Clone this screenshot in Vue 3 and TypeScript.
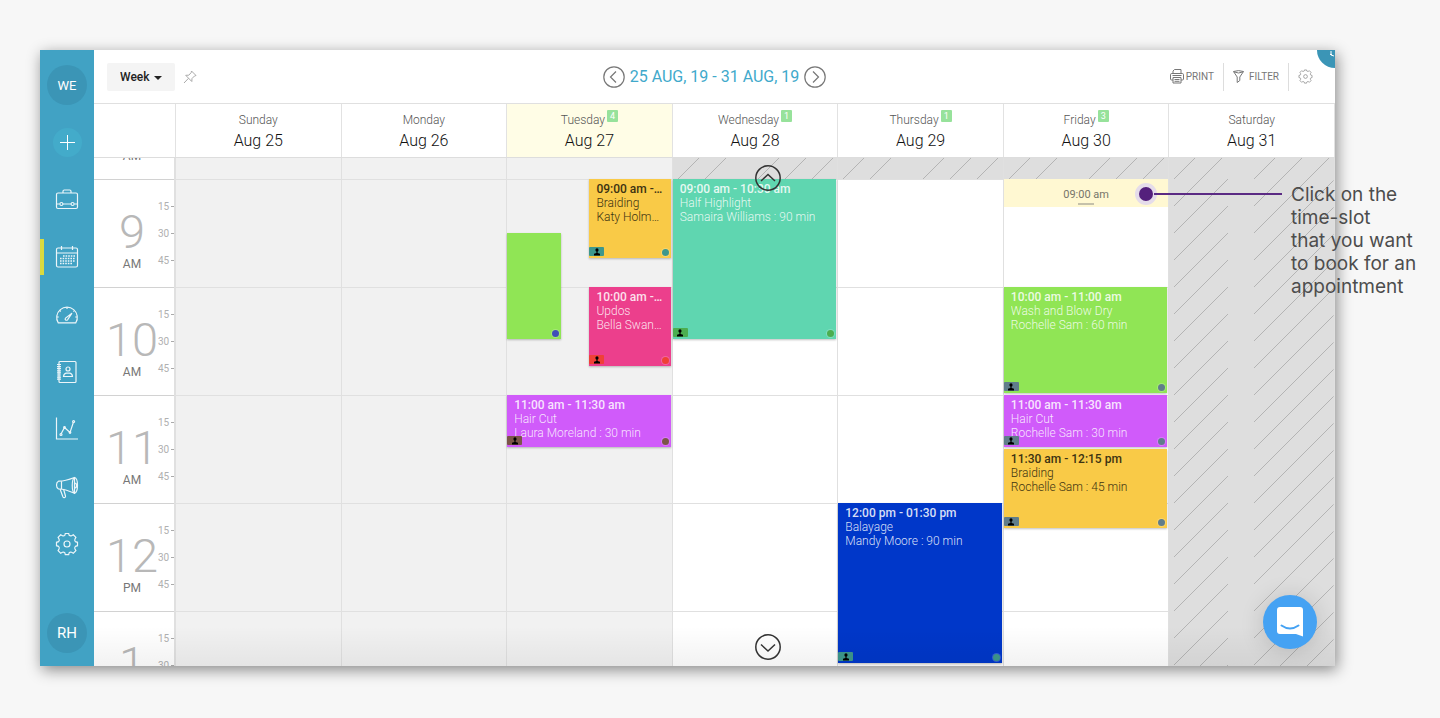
<script setup lang="ts">
interface Appointment {
  start: number
  end: number
  lane?: 'half' | 'third'
  color: string
  ink: string
  mark: string
  time?: string
  service?: string
  client?: string
}

interface Day {
  name: string
  date: string
  count?: number
  today?: boolean
  past?: boolean
  closedUntil?: number
  freeSlot?: boolean
  items: Appointment[]
}

const FIRST_HOUR = 8
const HOUR_HEIGHT = 108
const GAP = 2

const at = (hour: number, minute = 0): number => hour * 60 + minute
const toPixels = (minutes: number): number => Math.round((minutes * HOUR_HEIGHT) / 60)
const offset = (minutes: number): string => `${toPixels(minutes - at(FIRST_HOUR))}px`

const place = (item: Appointment) => ({
  top: offset(item.start),
  height: `${toPixels(item.end - item.start) - GAP}px`,
  background: item.color,
  color: item.ink,
})

const amber = '#f9ca47'
const pink = '#ec3f8c'
const violet = '#d05bfa'
const lime = '#90e555'
const dark = '#3d3312'
const light = 'rgba(255, 255, 255, 0.85)'

const hours = [
  { label: '8', half: 'AM' },
  { label: '9', half: 'AM' },
  { label: '10', half: 'AM' },
  { label: '11', half: 'AM' },
  { label: '12', half: 'PM' },
  { label: '1', half: 'PM' },
]

const days: Day[] = [
  { name: 'Sunday', date: 'Aug 25', past: true, items: [] },
  { name: 'Monday', date: 'Aug 26', past: true, items: [] },
  {
    name: 'Tuesday',
    date: 'Aug 27',
    count: 4,
    today: true,
    past: true,
    items: [
      { start: at(9), end: at(9, 45), lane: 'half', color: amber, ink: dark, mark: '#3d978c', time: '09:00 am - 09:45 am', service: 'Braiding', client: 'Katy Holmes : 45 min' },
      { start: at(9, 30), end: at(10, 30), lane: 'third', color: lime, ink: light, mark: '#4050b8' },
      { start: at(10), end: at(10, 45), lane: 'half', color: pink, ink: light, mark: '#ef4136', time: '10:00 am - 10:45 am', service: 'Updos', client: 'Bella Swanson : 45 min' },
      { start: at(11), end: at(11, 30), color: violet, ink: light, mark: '#7b5548', time: '11:00 am - 11:30 am', service: 'Hair Cut', client: 'Laura Moreland : 30 min' },
    ],
  },
  {
    name: 'Wednesday',
    date: 'Aug 28',
    count: 1,
    closedUntil: at(9),
    items: [
      { start: at(9), end: at(10, 30), color: '#5fd6b0', ink: light, mark: '#4cae50', time: '09:00 am - 10:30 am', service: 'Half Highlight', client: 'Samaira Williams : 90 min' },
    ],
  },
  {
    name: 'Thursday',
    date: 'Aug 29',
    count: 1,
    closedUntil: at(9),
    items: [
      { start: at(12), end: at(13, 30), color: '#0037c9', ink: light, mark: '#3d978c', time: '12:00 pm - 01:30 pm', service: 'Balayage', client: 'Mandy Moore : 90 min' },
    ],
  },
  {
    name: 'Friday',
    date: 'Aug 30',
    count: 3,
    closedUntil: at(9),
    freeSlot: true,
    items: [
      { start: at(10), end: at(11), color: lime, ink: light, mark: '#607d8b', time: '10:00 am - 11:00 am', service: 'Wash and Blow Dry', client: 'Rochelle Sam : 60 min' },
      { start: at(11), end: at(11, 30), color: violet, ink: light, mark: '#607d8b', time: '11:00 am - 11:30 am', service: 'Hair Cut', client: 'Rochelle Sam : 30 min' },
      { start: at(11, 30), end: at(12, 15), color: amber, ink: dark, mark: '#607d8b', time: '11:30 am - 12:15 pm', service: 'Braiding', client: 'Rochelle Sam : 45 min' },
    ],
  },
  { name: 'Saturday', date: 'Aug 31', closedUntil: at(14), items: [] },
]

const hatchStarts = [5, 32, 85, 112, 139]
</script>

<template>
  <div class="page">
    <div class="window">
      <nav class="sidebar" aria-label="Main">
        <button class="avatar" type="button">WE</button>
        <button class="add" type="button" aria-label="Add">
          <svg width="15" height="15" viewBox="0 0 15 15"><path d="M7.500 0v15M0 7.500h15" /></svg>
        </button>
        <div class="menu">
          <button type="button" aria-label="Sales">
            <svg viewBox="0 0 24 24"><rect x="1.500" y="5" width="21" height="15.500" rx="1.500" /><path d="M8 5V3.300Q8 2 9.300 2h5.400Q16 2 16 3.300V5M1.500 16h3.300M8 16h8M19.200 16h3.300" /><circle cx="6.400" cy="16" r="1.500" /><circle cx="17.600" cy="16" r="1.500" /></svg>
          </button>
          <button type="button" class="active" aria-label="Calendar">
            <svg viewBox="0 0 24 24"><rect x="1.500" y="3" width="21" height="19" rx="1.500" /><path d="M1.500 8h21M6.500 1v4M17.500 1v4" /><path class="dots" d="M8 11h12M5 13.500h15M5 16h15M5 18.500h12" /></svg>
          </button>
          <button type="button" aria-label="Dashboard">
            <svg viewBox="0 0 24 24"><path d="M3.200 19.800A10.300 10.300 0 1 1 20.800 19.800Z" /><path d="M12 4v2M4.800 7.500l1 1M1.800 14h2M22.200 14h-2M18.800 8l-.5.5" /><path d="M17 10.200l-4.500 6.600a1.300 1.300 0 0 1-2-1.700Z" /></svg>
          </button>
          <button type="button" aria-label="Clients">
            <svg viewBox="0 0 24 24"><rect x="4" y="1.500" width="17" height="21" rx="1" /><path d="M2 4.500h4M2 6.600h4M2 8.700h4M2 10.800h4M2 12.900h4M2 15h4M2 17.100h4M2 19.200h4" /><circle cx="13" cy="9" r="2" /><path d="M8.500 16.500q.3-3 3-3.300h3q2.700.3 3 3.300Z" /></svg>
          </button>
          <button type="button" aria-label="Reports">
            <svg viewBox="0 0 24 24"><path d="M1.500 0.500v21.500h21.500M6 17l3.500-6.500 5.500 5 3.500-10.500" /><circle cx="6" cy="17.500" r="1" /><circle cx="9.500" cy="10.500" r=".8" /><circle cx="15" cy="15.500" r=".8" /><circle cx="18.600" cy="4.500" r="1" /></svg>
          </button>
          <button type="button" aria-label="Marketing">
            <svg viewBox="0 0 24 24"><path d="M19.500 2.500Q9 6.500 3.500 6.200 1.500 7 1.500 10t2 4q6-.2 16 4.300Z" /><path d="M19.500 2.500c4 1 4 14.500 0 15.800-3-2-3-13.800 0-15.800M6.500 6.200v7.700M5 14l3 8q.6 1 1.800.5 1-.5.700-1.500L8.500 14M19.500 8q2 0 2 2.500t-2 2.500" /></svg>
          </button>
          <button type="button" aria-label="Settings">
            <svg viewBox="0 0 24 24"><circle cx="12" cy="12" r="3" /><path d="M9.800 3.300 10.300 1.500h3.400l.5 1.800q1 .9 2.400.4L18.300 2.800l2.600 2.600-1 1.800q-.5 1.400.5 2.500l2.100.6v3.400l-2.100.6q-1 1-.5 2.500l1 1.800-2.600 2.600-1.700-1q-1.500-.5-2.400.5l-.5 1.900h-3.400l-.5-1.900q-1-1-2.400-.5l-1.700 1-2.600-2.600 1-1.800q.5-1.500-.5-2.500l-2.100-.6v-3.400l2.100-.6q1-1 .5-2.500l-1-1.800 2.600-2.600 1.700.9q1.500.5 2.400-.4Z" /></svg>
          </button>
        </div>
        <button class="avatar user" type="button">RH</button>
      </nav>

      <main class="main">
        <header class="toolbar">
          <div class="tools">
            <div class="picker">
              <select aria-label="View"><option>Week</option></select>
              <svg width="8" height="4" viewBox="0 0 8 4"><path d="M0 0h8L4 4Z" /></svg>
            </div>
            <button type="button" class="pin" aria-label="Pin">
              <svg width="14" height="14" viewBox="0 0 14 14"><path d="M8.500 1 13 5.500 11.500 6 9 8.500 8.800 11.500 2.700 5.300 5.800 5.200 8.200 2.600ZM5.500 8.300 1 13" /></svg>
            </button>
          </div>
          <div class="range">
            <button type="button" aria-label="Previous week">
              <svg width="22" height="22" viewBox="0 0 22 22"><circle cx="11" cy="11" r="10.200" /><path d="M13 5.500 7.500 11l5.500 5.500" /></svg>
            </button>
            <span>25 AUG, 19 - 31 AUG, 19</span>
            <button type="button" aria-label="Next week">
              <svg width="22" height="22" viewBox="0 0 22 22"><circle cx="11" cy="11" r="10.200" /><path d="M9 5.500 14.500 11 9 16.500" /></svg>
            </button>
          </div>
          <div class="actions">
            <button type="button">
              <svg width="14" height="15" viewBox="0 0 14 15"><path d="M3 4.500V2l1.500-1.500H11v4M3 11H1.700Q.5 11 .5 10V5.700Q.5 4.500 1.700 4.500h10.600q1.200 0 1.200 1.200V10q0 1-1.200 1H11M3 8.500h8v5.500H3ZM4.500 10.500h5M4.500 12.300h5M2.500 6.500h9" /></svg>
              PRINT
            </button>
            <button type="button" class="filter">
              <svg width="11" height="13" viewBox="0 0 11 13"><path d="M.5 1.500Q5.500-.3 10.500 1.500L6.800 7v3.500L4.200 12.500V7ZM.7 1.800q4.800 2.400 9.600 0" /></svg>
              FILTER
            </button>
            <button type="button" class="gear" aria-label="Calendar settings">
              <svg width="15" height="15" viewBox="0 0 24 24"><circle cx="12" cy="12" r="3" /><path d="M9.800 3.300 10.300 1.500h3.400l.5 1.800q1 .9 2.400.4L18.300 2.800l2.600 2.600-1 1.800q-.5 1.400.5 2.500l2.100.6v3.400l-2.100.6q-1 1-.5 2.500l1 1.800-2.600 2.600-1.700-1q-1.500-.5-2.400.5l-.5 1.900h-3.400l-.5-1.900q-1-1-2.400-.5l-1.700 1-2.600-2.600 1-1.800q.5-1.500-.5-2.500l-2.100-.6v-3.400l2.100-.6q1-1 .5-2.500l-1-1.800 2.600-2.600 1.700.9q1.500.5 2.400-.4Z" /></svg>
            </button>
          </div>
        </header>

        <div class="days">
          <div class="corner"></div>
          <div v-for="day in days" :key="day.name" class="day" :class="{ today: day.today }">
            <div class="day-name">{{ day.name }}<span v-if="day.count" class="count">{{ day.count }}</span></div>
            <div class="day-date">{{ day.date }}</div>
          </div>
        </div>

        <div class="board">
          <div class="schedule">
            <div class="times">
              <div v-for="hour in hours" :key="hour.label" class="hour">
                <div class="hour-label">
                  <span class="number">{{ hour.label }}</span>
                  <span class="meridiem">{{ hour.half }}</span>
                </div>
                <div class="ticks"><span>15</span><span>30</span><span>45</span></div>
              </div>
            </div>
            <div v-for="(day, index) in days" :key="day.name" class="column" :class="{ past: day.past }">
              <div v-for="hour in hours" :key="hour.label" class="cell"></div>
              <svg v-if="day.closedUntil" class="closed" :style="{ height: offset(day.closedUntil) }">
                <defs>
                  <pattern :id="`hatch-${index}`" width="166" height="27" patternUnits="userSpaceOnUse">
                    <path v-for="x in hatchStarts" :key="x" :d="`M${x} 27l27-27`" />
                  </pattern>
                </defs>
                <rect width="100%" height="100%" :fill="`url(#hatch-${index})`" />
              </svg>
              <button v-if="day.freeSlot" type="button" class="slot" :style="{ top: offset(at(9)) }">09:00 am</button>
              <article v-for="item in day.items" :key="item.start" class="event" :class="item.lane" :style="place(item)">
                <template v-if="item.time">
                  <strong>{{ item.time }}</strong>
                  <p>{{ item.service }}</p>
                  <p>{{ item.client }}</p>
                  <span class="person" :style="{ background: item.mark }">
                    <svg width="8" height="8" viewBox="0 0 8 8"><circle cx="4" cy="1.900" r="1.600" /><path d="M3.400 3h1.200v2L7 5.700V7.500H1V5.700L3.400 5Z" /></svg>
                  </span>
                </template>
                <span class="dot" :style="{ background: item.mark }"></span>
              </article>
            </div>
          </div>
          <div class="fade"></div>
          <button type="button" class="scroll up" aria-label="Earlier">
            <svg width="26" height="26" viewBox="0 0 26 26"><circle cx="13" cy="13" r="12.200" /><path d="M6 16l7-6.500L20 16" /></svg>
          </button>
          <button type="button" class="scroll down" aria-label="Later">
            <svg width="26" height="26" viewBox="0 0 26 26"><circle cx="13" cy="13" r="12.200" /><path d="M6 10.500l7 6.500 7-6.500" /></svg>
          </button>
        </div>
      </main>

      <button type="button" class="help" aria-label="Help">
        <svg width="36" height="36" viewBox="0 0 36 36"><path d="M14 19v4l3 1M13 22.500h2" /></svg>
      </button>
      <button type="button" class="chat" aria-label="Open chat">
        <svg width="26" height="30" viewBox="0 0 26 30"><path class="bubble" d="M3 0h20q3 0 3 3v26.500L19 27H3q-3 0-3-3V3Q0 0 3 0Z" /><path class="smile" d="M4.500 18.500q8.500 6 17 0" /></svg>
      </button>
    </div>

    <aside class="callout">
      <span class="callout-dot"></span>
      <span class="callout-line"></span>
      <p>Click on the<br />time-slot<br />that you want<br />to book for an<br />appointment</p>
    </aside>
  </div>
</template>

<style>
body {
  background: #f7f7f7;
}
</style>

<style scoped>
.page {
  position: relative;
  box-sizing: border-box;
  padding: 50px 105px 52px 40px;
  font-family: Roboto, "Liberation Sans", sans-serif;
  color: #333;
}

button {
  font: inherit;
  color: inherit;
  border: 0;
  padding: 0;
  background: none;
  display: flex;
  align-items: center;
  justify-content: center;
}

svg {
  display: block;
  fill: none;
  stroke: currentColor;
}

p {
  margin: 0;
}

.window {
  position: relative;
  display: flex;
  height: calc(100vh - 102px);
  min-height: 560px;
  background: #fff;
  box-shadow: 2px 4px 14px rgba(0, 0, 0, 0.45);
  overflow: hidden;
}

.sidebar {
  flex: none;
  box-sizing: border-box;
  width: 54px;
  padding: 15px 0 13px;
  background: #41a2c4;
  color: #fff;
  display: flex;
  flex-direction: column;
  align-items: center;
}

.avatar {
  width: 40px;
  height: 40px;
  border-radius: 50%;
  background: #3b95b6;
  font-size: 13px;
}

.user {
  margin-top: auto;
  font-size: 15px;
}

.add {
  width: 29px;
  height: 29px;
  margin: 23px 0 14px;
  border-radius: 50%;
  background: #43abca;
}

.menu {
  width: 100%;
  height: 402px;
  display: grid;
  grid-auto-rows: 1fr;
}

.menu button {
  position: relative;
  width: 100%;
}

.menu svg {
  width: 24px;
  height: 24px;
  opacity: 0.9;
  stroke-width: 1.2;
}

.menu .dots {
  stroke-width: 1.6;
  stroke-dasharray: 1.6 1;
}

.menu .active::before {
  content: "";
  position: absolute;
  left: 0;
  top: 11px;
  width: 4px;
  height: 36px;
  background: #dada3f;
}

.main {
  flex: 1;
  min-width: 0;
  display: flex;
  flex-direction: column;
}

.toolbar {
  flex: none;
  height: 53px;
  display: grid;
  grid-template-columns: 1fr auto 1fr;
  align-items: center;
  border-bottom: 1px solid #e0e0e0;
}

.tools {
  display: flex;
  align-items: center;
  gap: 8px;
  padding-left: 13px;
}

.picker {
  position: relative;
}

.picker select {
  appearance: none;
  height: 28px;
  width: 68px;
  padding: 0 13px;
  border: 0;
  border-radius: 2px;
  background: #f4f4f4;
  color: #222;
  font: 500 12px Roboto, sans-serif;
}

.picker svg {
  position: absolute;
  right: 13px;
  top: 13px;
  fill: #222;
  stroke: none;
}

.pin {
  color: #aaa;
}

.range {
  display: flex;
  align-items: center;
  gap: 5px;
  color: #41a9cb;
  font-size: 16px;
}

.range button {
  color: #777;
}

.range svg {
  stroke-width: 1.2;
}

.actions {
  display: flex;
  align-items: center;
  justify-content: flex-end;
  padding-right: 13px;
  font-size: 10px;
  color: #777;
}

.actions button {
  height: 28px;
  gap: 2px;
  padding: 0 9px;
}

.actions .filter {
  gap: 5px;
  border: solid #ddd;
  border-width: 0 1px;
}

.days,
.schedule {
  display: grid;
  grid-template-columns: 82px repeat(7, minmax(0, 1fr));
}

.days {
  flex: none;
  height: 53px;
  border-bottom: 1px solid #ddd;
}

.corner,
.day {
  border-right: 1px solid #e2e2e2;
}

.day {
  display: flex;
  flex-direction: column;
  align-items: center;
  padding-top: 6px;
}

.today {
  background: #fffde6;
}

.day-name {
  display: flex;
  gap: 2px;
  font-size: 12px;
  line-height: 20px;
  font-weight: 300;
  color: #555;
}

.count {
  width: 11px;
  height: 12px;
  border-radius: 1px;
  background: #97e29b;
  color: #fff;
  font-size: 9px;
  font-weight: 400;
  line-height: 12px;
  text-align: center;
}

.day-date {
  font-size: 16px;
  line-height: 21px;
  font-weight: 300;
  color: #111;
}

.board {
  position: relative;
  flex: 1;
  min-height: 0;
  overflow: hidden;
}

.schedule {
  margin-top: -87px;
}

.times {
  border-right: 2px solid #e0e0e0;
}

.hour {
  box-sizing: border-box;
  height: 108px;
  display: flex;
  justify-content: space-between;
  border-top: 1px solid #d2d2d2;
}

.hour-label {
  width: 76px;
  padding-top: 27px;
  display: flex;
  flex-direction: column;
  align-items: center;
}

.number {
  font-size: 47px;
  line-height: 50px;
  font-weight: 300;
  color: #b8b8b8;
}

.meridiem {
  font-size: 12px;
  line-height: 14px;
  color: #777;
}

.ticks {
  flex: none;
  width: 16px;
  margin-left: -16px;
  padding-top: 13px;
  font-size: 10px;
  line-height: 27px;
  color: #b0b0b0;
}

.ticks span {
  display: flex;
  align-items: center;
  justify-content: flex-end;
  gap: 2px;
}

.ticks span::after {
  content: "";
  width: 3px;
  height: 1px;
  background: #aaa;
}

.column {
  position: relative;
  border-right: 1px solid #e0e0e0;
}

.past {
  background: #f1f1f1;
}

.cell {
  box-sizing: border-box;
  height: 108px;
  border-top: 1px solid #e0e0e0;
}

.closed {
  position: absolute;
  left: 0;
  top: 0;
  width: 100%;
  background: #dedede;
  stroke: #b4b4b4;
}

.closed rect {
  stroke: none;
}

.slot {
  position: absolute;
  left: 0;
  width: 100%;
  height: 28px;
  padding-top: 3px;
  background: #fff8d2;
  color: #77756a;
  font-size: 11px;
}

.slot::after {
  content: "";
  position: absolute;
  bottom: 2px;
  left: calc(50% - 8px);
  width: 16px;
  height: 2px;
  background: #c5c1aa;
}

.event {
  position: absolute;
  left: 0;
  right: 1px;
  box-sizing: border-box;
  padding: 3px 7px 0;
  font-size: 12px;
  line-height: 14px;
  box-shadow: 0 1px 2px rgba(0, 0, 0, 0.25);
}

.half {
  left: 50%;
}

.third {
  right: 67%;
}

.event strong,
.event p {
  display: block;
  font-weight: 300;
  overflow: hidden;
  white-space: nowrap;
  text-overflow: ellipsis;
}

.event strong {
  font-weight: 500;
}

.person {
  position: absolute;
  left: 0;
  bottom: 2px;
  width: 15px;
  height: 9px;
  border-radius: 1px;
  display: flex;
  align-items: center;
  justify-content: center;
}

.person svg {
  fill: #000;
  stroke: none;
}

.dot {
  position: absolute;
  right: 2px;
  bottom: 2px;
  width: 7px;
  height: 7px;
  border-radius: 50%;
  box-shadow: 0 0 0 1px rgba(255, 255, 255, 0.2);
}

.fade {
  position: absolute;
  left: 0;
  right: 0;
  bottom: 0;
  height: 40px;
  background: linear-gradient(transparent, rgba(0, 0, 0, 0.05));
  pointer-events: none;
}

.scroll {
  position: absolute;
  left: calc(50% + 40px);
  color: #333;
}

.scroll svg {
  stroke-width: 1.5;
}

.up {
  top: 7px;
}

.down {
  bottom: 6px;
}

.help {
  position: absolute;
  right: -18px;
  top: -18px;
  width: 36px;
  height: 36px;
  border-radius: 50%;
  background: #3b95b6;
  color: #fff;
}

.chat {
  position: absolute;
  right: 18px;
  bottom: 17px;
  width: 54px;
  height: 54px;
  border-radius: 50%;
  background: #45a2f3;
  box-shadow: 0 2px 24px rgba(0, 0, 0, 0.16);
}

.bubble {
  fill: #fff;
  stroke: none;
}

.smile {
  stroke: #45a2f3;
  stroke-width: 2;
  stroke-linecap: round;
}

.callout {
  position: absolute;
  top: 183px;
  left: calc(100% - 305px);
  display: flex;
}

.callout-dot {
  width: 14px;
  height: 14px;
  margin-right: -3px;
  border: 4px solid #e5dcea;
  border-radius: 50%;
  background: #54207c;
}

.callout-line {
  width: 128px;
  height: 2px;
  margin: 10px 9px 0 0;
  background: #5b2a84;
}

.callout p {
  font-family: Inter, "Open Sans", sans-serif;
  font-size: 19px;
  line-height: 23px;
  color: #4d4d4d;
  white-space: nowrap;
}
</style>
